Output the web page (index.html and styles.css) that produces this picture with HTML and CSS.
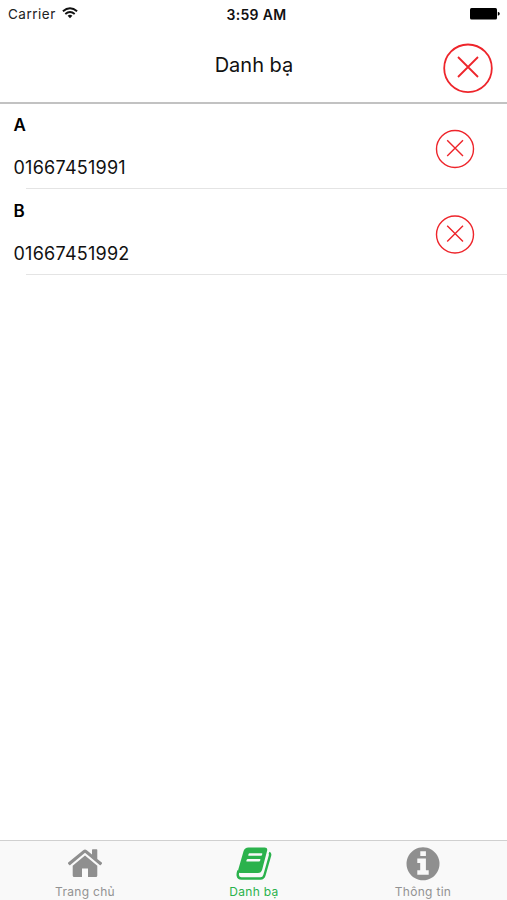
FILE: index.html
```
<!DOCTYPE html>
<html lang="vi">
<head>
<meta charset="utf-8">
<title>Danh bạ</title>
<link rel="stylesheet" href="styles.css">
</head>
<body>
<div class="status">
  <div class="carrier"><span>Carrier</span>
    <svg width="16" height="12" viewBox="0 0 16 12"><g fill="none" stroke="#111" stroke-width="1.9"><path d="M.9 4.300Q8-1.800 15.100 4.300"/><path d="M3.300 7Q8 3 12.700 7"/></g><path d="M5.600 8.700Q8 6.900 10.400 8.700L8 11.300Z" fill="#111"/></svg>
  </div>
  <div class="time">3:59 AM</div>
  <svg class="battery" width="31" height="12" viewBox="0 0 31 12"><rect x="1" width="27" height="11.500" rx="1.500"/><path d="M28.800 3.800q2 .3 2 2t-2 2z"/></svg>
</div>
<header class="header">
  <h1 class="title">Danh bạ</h1>
  <button class="close" aria-label="Đóng"><svg width="50" height="50" viewBox="0 0 50 50"><circle cx="25" cy="25.300" r="23.800"/><path d="M15 14L35 34M35 14L15 34"/></svg></button>
</header>
<main class="list">
  <div class="row">
    <div class="contact"><div class="name">A</div><div class="phone">01667451991</div></div>
    <button class="remove" aria-label="Xóa"><svg width="40" height="40" viewBox="0 0 40 40"><circle cx="20" cy="20" r="18.500"/><path d="M12.200 11.200L28 27M28 11.200L12.200 27"/></svg></button>
  </div>
  <div class="row">
    <div class="contact"><div class="name">B</div><div class="phone">01667451992</div></div>
    <button class="remove" aria-label="Xóa"><svg width="40" height="40" viewBox="0 0 40 40"><circle cx="20" cy="19.500" r="18.500"/><path d="M12.200 10.700L28 26.500M28 10.700L12.200 26.500"/></svg></button>
  </div>
</main>
<nav class="tabs">
  <div class="tab">
    <svg width="36" height="34" viewBox="0 0 36 34"><path d="M18 8.600L30.300 18.700V28.500q0 1.500-1.500 1.500H21v-8.500h-6V30H7.200q-1.500 0-1.500-1.500V18.700Z"/><path d="M16.200 3.200q1.800-1.500 3.600 0L25 7.500V3q0-.7.700-.7H29.600q.7 0 .7.700v8.900l4.500 3.700q.6.500.1 1.100l-1.100 1.300q-.5.500-1.100 0L18 5.700 3.300 18q-.6.500-1.100 0L1.100 16.700q-.5-.6.100-1.100Z"/></svg>
    <span class="label">Trang chủ</span>
  </div>
  <div class="tab active">
    <svg width="36" height="34" viewBox="0 0 36 34"><path fill-rule="evenodd" d="M12.500.5H28.700q3.200 0 2.400 3.200L26.200 22.500q-1 3.500-4.200 3.500H5Q1.500 26 2.300 22.500L7.600 4Q8.700.5 12.500.5ZM13.600 6.300q-.8 0-1 .8l-.3.900q-.2.800.6.800H25q.8 0 1-.8l.3-.9q.2-.8-.6-.8ZM11.700 12q-.8 0-1 .8l-.3.900q-.2.800.6.800H23.100q.8 0 1-.8l.3-.9q.2-.8-.6-.8Z"/><path class="pages" d="M33 5.800q1.600.6 1 2.800L28.500 28q-.9 3.500-4 3.500H5.500q-3.300 0-3.800-3.300-.1-1.700.7-4.700"/></svg>
    <span class="label">Danh bạ</span>
  </div>
  <div class="tab">
    <svg width="36" height="34" viewBox="0 0 36 34"><path fill-rule="evenodd" d="M18 .3a16.500 16.500 0 1 0 .01 0ZM15.300 4.300h5.600v4.700h-5.600ZM12.300 11.500h8.600v11.800h2.800v4.500H12.300v-4.500h2.900v-7.400h-2.900Z"/></svg>
    <span class="label">Thông tin</span>
  </div>
</nav>
</body>
</html>
```
FILE: styles.css
```
* { box-sizing: border-box; }
body {
  margin: 0;
  height: 900px;
  display: flex;
  flex-direction: column;
  background: #fff;
  color: #111;
  font-family: Inter, "Noto Sans", sans-serif;
  overflow: hidden;
}
button { border: 0; padding: 0; background: none; display: block; }
svg { display: block; flex: none; }
.status {
  height: 28px;
  display: grid;
  grid-template-columns: 1fr auto 1fr;
  align-items: center;
  padding: 0 7px 0 8px;
  font-size: 13.500px;
}
.carrier { display: flex; align-items: center; gap: 6px; letter-spacing: .5px; color: #222; }
.carrier svg { margin-top: -2px; }
.time { font-size: 14px; font-weight: 600; letter-spacing: .35px; padding-left: 5px; }
.battery { justify-self: end; margin-top: -1px; }
.header {
  height: 76px;
  border-bottom: 2px solid #c2c2c2;
  display: grid;
  grid-template-columns: 1fr auto 1fr;
  align-items: start;
  padding: 15px 14px 0;
}
.title {
  grid-column: 2;
  margin: 9px 0 0;
  padding-left: 1px;
  font-size: 20px;
  line-height: 26px;
  font-weight: 400;
}
.close { justify-self: end; }
.close svg, .remove svg { fill: none; stroke: #ee252b; stroke-width: 1.8; }
.remove svg { stroke-width: 1.4; }
.row {
  height: 85px;
  display: flex;
  justify-content: space-between;
  padding: 9px 32px 0 13.500px;
  background: linear-gradient(#e4e4e4, #e4e4e4) 26px 100% / 100% 1px no-repeat;
}
.row + .row { height: 85.500px; padding-top: 10px; }
.name { font-size: 17px; line-height: 24px; font-weight: 600; color: #000; }
.phone { margin-top: 19px; font-size: 18px; line-height: 24px; letter-spacing: .25px; }
.remove { height: 40px; margin-top: 16px; }
.tabs {
  margin-top: auto;
  height: 60px;
  border-top: 1px solid #d0d0d0;
  background: #f9f9f9;
  display: grid;
  grid-template-columns: repeat(3, 1fr);
  fill: #8f8f8f;
  color: #929292;
}
.tab { display: flex; flex-direction: column; align-items: center; padding-top: 6px; }
.active { fill: #2bb24c; color: #2bb24c; }
.pages { fill: none; stroke: #2bb24c; stroke-width: 2.400; }
.label { font-size: 12px; line-height: 14px; margin-top: 4px; padding-left: 1px; letter-spacing: .3px; }
```
